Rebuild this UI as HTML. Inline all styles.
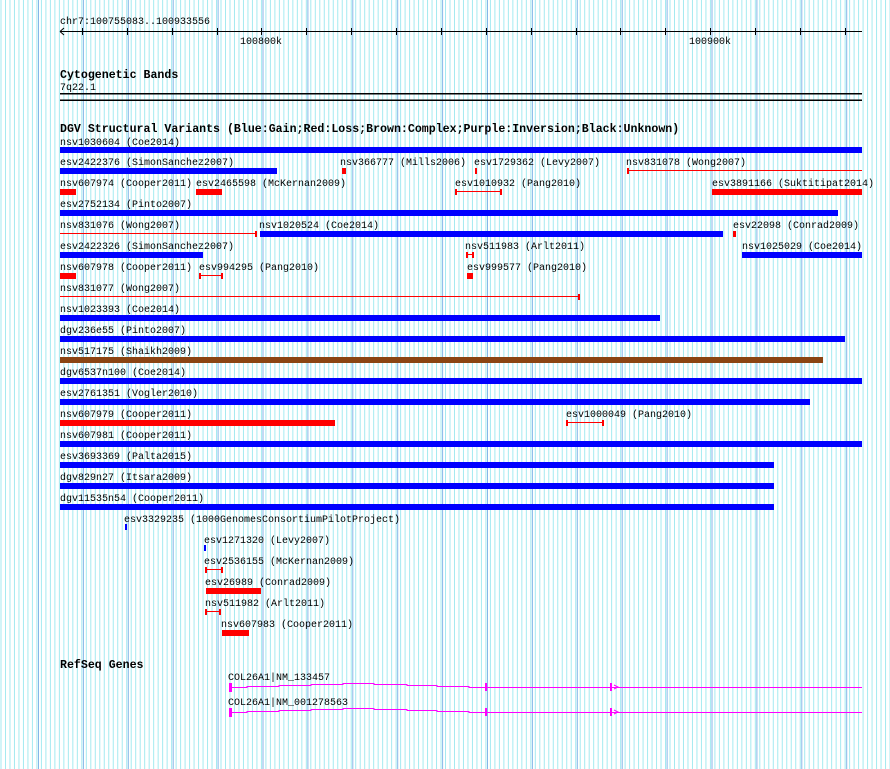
<!DOCTYPE html>
<html><head><style>
html,body{margin:0;padding:0;background:#fff;}
svg{display:block;}
text{font-family:"Liberation Mono",monospace;font-size:10px;fill:#000;}
.b{font-weight:bold;font-size:11.6px;}
</style></head><body>
<svg width="890" height="769" xmlns="http://www.w3.org/2000/svg">
<defs>
<pattern id="mn" x="0.5" y="0" width="4.49" height="769" patternUnits="userSpaceOnUse"><rect x="0" y="0" width="1" height="769" fill="#a4eaf0"/></pattern>
<pattern id="mj" x="82.9" y="0" width="44.9" height="769" patternUnits="userSpaceOnUse"><rect x="0" y="0" width="1" height="769" fill="#86b6e8"/></pattern>
</defs>
<rect width="890" height="769" fill="#fff"/>
<rect x="0" y="0" width="890" height="769" fill="url(#mn)"/>
<rect x="0" y="0" width="890" height="769" fill="url(#mj)"/>

<!-- ruler -->
<text x="60" y="24">chr7:100755083..100933556</text>
<rect x="60" y="31" width="802" height="1" fill="#000"/>
<path d="M60 31.5 L64 28 M60 31.5 L64 35" stroke="#000" fill="none"/>
<g fill="#000">
<rect x="82" y="28" width="1" height="7"/><rect x="127" y="28" width="1" height="7"/><rect x="172" y="28" width="1" height="7"/><rect x="217" y="28" width="1" height="7"/><rect x="261" y="28" width="1" height="7"/><rect x="306" y="28" width="1" height="7"/><rect x="351" y="28" width="1" height="7"/><rect x="396" y="28" width="1" height="7"/><rect x="441" y="28" width="1" height="7"/><rect x="486" y="28" width="1" height="7"/><rect x="531" y="28" width="1" height="7"/><rect x="576" y="28" width="1" height="7"/><rect x="620" y="28" width="1" height="7"/><rect x="665" y="28" width="1" height="7"/><rect x="710" y="28" width="1" height="7"/><rect x="755" y="28" width="1" height="7"/><rect x="800" y="28" width="1" height="7"/><rect x="845" y="28" width="1" height="7"/>
</g>
<text x="240" y="44">100800k</text>
<text x="689" y="44">100900k</text>

<text class="b" x="60" y="78">Cytogenetic Bands</text>
<text x="60" y="90">7q22.1</text>
<rect x="60" y="93" width="802" height="1.5" fill="#000"/>
<rect x="60" y="99.5" width="802" height="1.5" fill="#000"/>

<text class="b" x="60" y="132">DGV Structural Variants (Blue:Gain;Red:Loss;Brown:Complex;Purple:Inversion;Black:Unknown)</text>

<text x="60" y="145">nsv1030604 (Coe2014)</text>
<rect x="60" y="147" width="802" height="6" fill="#0000ff"/>

<text x="60" y="165">esv2422376 (SimonSanchez2007)</text>
<text x="340" y="165">nsv366777 (Mills2006)</text>
<text x="474" y="165">esv1729362 (Levy2007)</text>
<text x="626" y="165">nsv831078 (Wong2007)</text>
<rect x="60" y="168" width="217" height="6" fill="#0000ff"/>
<rect x="342" y="168" width="4" height="6" fill="#f00"/>
<rect x="475" y="168" width="2" height="6" fill="#f00"/>
<rect x="627" y="170" width="235" height="1" fill="#f00"/><rect x="627" y="168" width="2" height="6" fill="#f00"/>

<text x="60" y="186">nsv607974 (Cooper2011)</text>
<text x="196" y="186">esv2465598 (McKernan2009)</text>
<text x="455" y="186">esv1010932 (Pang2010)</text>
<text x="712" y="186">esv3891166 (Suktitipat2014)</text>
<rect x="60" y="189" width="16" height="6" fill="#f00"/>
<rect x="196" y="189" width="26" height="6" fill="#f00"/>
<rect x="456" y="191" width="45" height="1" fill="#f00"/><rect x="455" y="189" width="2" height="6" fill="#f00"/><rect x="500" y="189" width="2" height="6" fill="#f00"/>
<rect x="712" y="189" width="150" height="6" fill="#f00"/>

<text x="60" y="207">esv2752134 (Pinto2007)</text>
<rect x="60" y="210" width="778" height="6" fill="#0000ff"/>

<text x="60" y="228">nsv831076 (Wong2007)</text>
<text x="259" y="228">nsv1020524 (Coe2014)</text>
<text x="733" y="228">esv22098 (Conrad2009)</text>
<rect x="60" y="233" width="196" height="1" fill="#f00"/><rect x="255" y="231" width="2" height="6" fill="#f00"/>
<rect x="260" y="231" width="463" height="6" fill="#0000ff"/>
<rect x="733" y="231" width="3" height="6" fill="#f00"/>

<text x="60" y="249">esv2422326 (SimonSanchez2007)</text>
<text x="465" y="249">nsv511983 (Arlt2011)</text>
<text x="742" y="249">nsv1025029 (Coe2014)</text>
<rect x="60" y="252" width="143" height="6" fill="#0000ff"/>
<rect x="466" y="254" width="7" height="1" fill="#f00"/><rect x="466" y="252" width="2" height="6" fill="#f00"/><rect x="472" y="252" width="2" height="6" fill="#f00"/>
<rect x="742" y="252" width="120" height="6" fill="#0000ff"/>

<text x="60" y="270">nsv607978 (Cooper2011)</text>
<text x="199" y="270">esv994295 (Pang2010)</text>
<text x="467" y="270">esv999577 (Pang2010)</text>
<rect x="60" y="273" width="16" height="6" fill="#f00"/>
<rect x="200" y="275" width="22" height="1" fill="#f00"/><rect x="199" y="273" width="2" height="6" fill="#f00"/><rect x="221" y="273" width="2" height="6" fill="#f00"/>
<rect x="467" y="273" width="6" height="6" fill="#f00"/>

<text x="60" y="291">nsv831077 (Wong2007)</text>
<rect x="60" y="296" width="520" height="1" fill="#f00"/><rect x="578" y="294" width="2" height="6" fill="#f00"/>

<text x="60" y="312">nsv1023393 (Coe2014)</text>
<rect x="60" y="315" width="600" height="6" fill="#0000ff"/>
<text x="60" y="333">dgv236e55 (Pinto2007)</text>
<rect x="60" y="336" width="785" height="6" fill="#0000ff"/>
<text x="60" y="354">nsv517175 (Shaikh2009)</text>
<rect x="60" y="357" width="763" height="6" fill="#8b4513"/>
<text x="60" y="375">dgv6537n100 (Coe2014)</text>
<rect x="60" y="378" width="802" height="6" fill="#0000ff"/>
<text x="60" y="396">esv2761351 (Vogler2010)</text>
<rect x="60" y="399" width="750" height="6" fill="#0000ff"/>

<text x="60" y="417">nsv607979 (Cooper2011)</text>
<text x="566" y="417">esv1000049 (Pang2010)</text>
<rect x="60" y="420" width="275" height="6" fill="#f00"/>
<rect x="567" y="422" width="36" height="1" fill="#f00"/><rect x="566" y="420" width="2" height="6" fill="#f00"/><rect x="602" y="420" width="2" height="6" fill="#f00"/>

<text x="60" y="438">nsv607981 (Cooper2011)</text>
<rect x="60" y="441" width="802" height="6" fill="#0000ff"/>
<text x="60" y="459">esv3693369 (Palta2015)</text>
<rect x="60" y="462" width="714" height="6" fill="#0000ff"/>
<text x="60" y="480">dgv829n27 (Itsara2009)</text>
<rect x="60" y="483" width="714" height="6" fill="#0000ff"/>
<text x="60" y="501">dgv11535n54 (Cooper2011)</text>
<rect x="60" y="504" width="714" height="6" fill="#0000ff"/>

<text x="124" y="522">esv3329235 (1000GenomesConsortiumPilotProject)</text>
<rect x="125" y="524" width="2" height="6" fill="#0000ff"/>
<text x="204" y="543">esv1271320 (Levy2007)</text>
<rect x="204" y="545" width="2" height="6" fill="#0000ff"/>
<text x="204" y="564">esv2536155 (McKernan2009)</text>
<rect x="205" y="569" width="17" height="1" fill="#f00"/><rect x="205" y="567" width="2" height="6" fill="#f00"/><rect x="221" y="567" width="2" height="6" fill="#f00"/>
<text x="205" y="585">esv26989 (Conrad2009)</text>
<rect x="206" y="588" width="55" height="6" fill="#f00"/>
<text x="205" y="606">nsv511982 (Arlt2011)</text>
<rect x="206" y="611" width="14" height="1" fill="#f00"/><rect x="205" y="609" width="2" height="6" fill="#f00"/><rect x="219" y="609" width="2" height="6" fill="#f00"/>
<text x="221" y="627">nsv607983 (Cooper2011)</text>
<rect x="222" y="630" width="27" height="6" fill="#f00"/>

<text class="b" x="60" y="668">RefSeq Genes</text>

<text x="228" y="680">COL26A1|NM_133457</text>
<rect x="229" y="683" width="3" height="9" fill="#f0f"/>
<polyline points="232,687.5 247,687.5 247,686.5 279,686.5 279,685.5 311,685.5 311,684.5 343,684.5 343,683.5 374,683.5 374,684.5 407,684.5 407,685.5 437,685.5 437,686.5 469,686.5 469,687.5 862,687.5" fill="none" stroke="#f0f" stroke-width="1"/>
<rect x="485" y="683" width="2" height="8" fill="#f0f"/>
<rect x="610" y="683" width="2" height="8" fill="#f0f"/>
<path d="M614 685 L618 687 L614 689" stroke="#f0f" fill="none"/>

<text x="228" y="705">COL26A1|NM_001278563</text>
<rect x="229" y="708" width="3" height="9" fill="#f0f"/>
<polyline points="232,712.5 247,712.5 247,711.5 279,711.5 279,710.5 311,710.5 311,709.5 343,709.5 343,708.5 374,708.5 374,709.5 407,709.5 407,710.5 437,710.5 437,711.5 469,711.5 469,712.5 862,712.5" fill="none" stroke="#f0f" stroke-width="1"/>
<rect x="485" y="708" width="2" height="8" fill="#f0f"/>
<rect x="610" y="708" width="2" height="8" fill="#f0f"/>
<path d="M614 710 L618 712 L614 714" stroke="#f0f" fill="none"/>
</svg>
</body></html>
